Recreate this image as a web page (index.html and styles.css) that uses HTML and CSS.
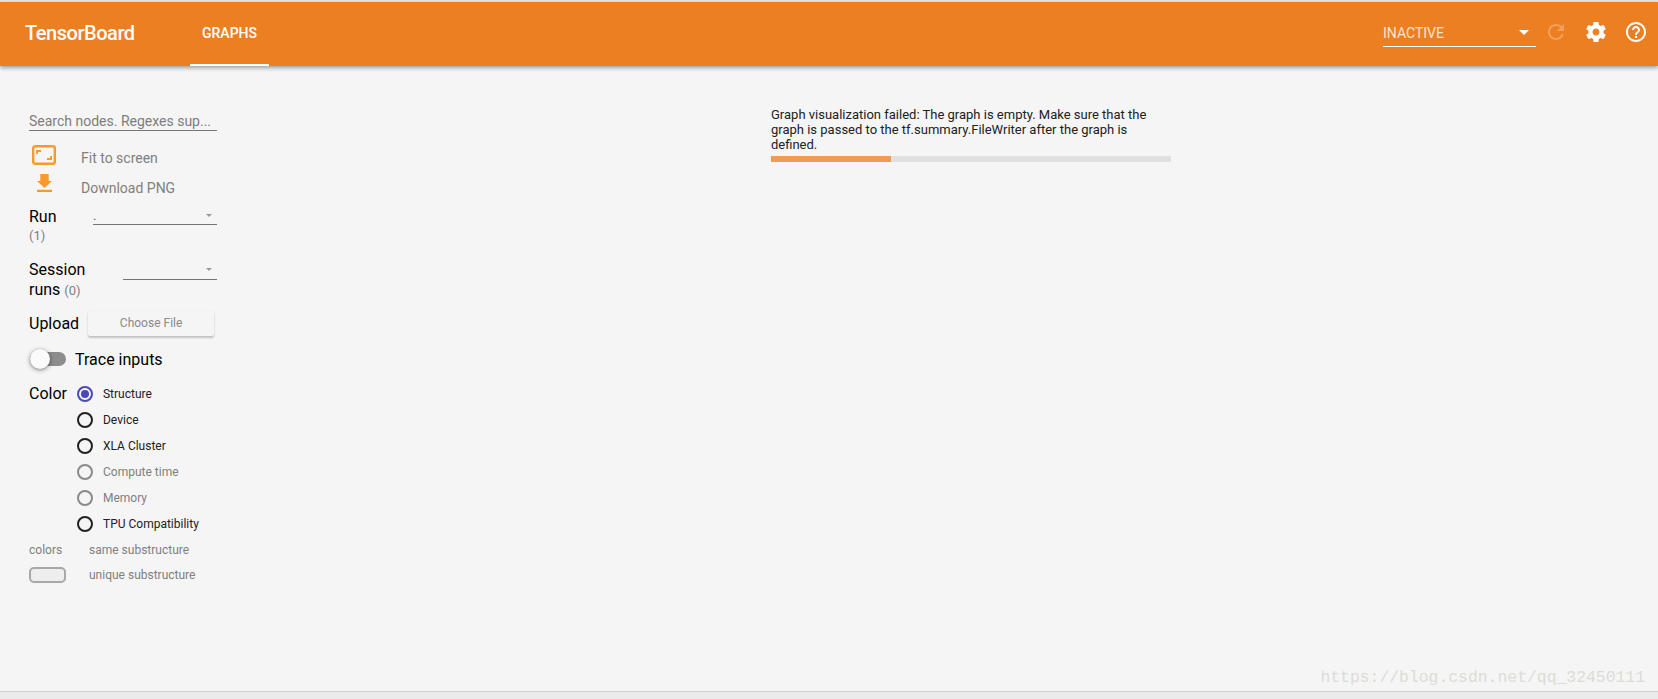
FILE: index.html
```html
<!DOCTYPE html>
<html lang="en">
<head>
<meta charset="utf-8">
<title>TensorBoard</title>
<link rel="stylesheet" href="styles.css">
</head>
<body>
<div class="page">
  <header class="toolbar">
    <div class="brand">TensorBoard</div>
    <nav class="tabs"><div class="tab">GRAPHS</div></nav>
    <div class="spacer"></div>
    <div class="run-select">
      <span>INACTIVE</span>
      <span class="caret-white"></span>
    </div>
    <svg class="icon refresh" viewBox="0 0 24 24"><path d="M17.65 6.35C16.2 4.9 14.21 4 12 4c-4.42 0-7.99 3.58-7.99 8s3.57 8 7.99 8c3.73 0 6.84-2.55 7.73-6h-2.08c-.82 2.33-3.04 4-5.65 4-3.31 0-6-2.69-6-6s2.69-6 6-6c1.66 0 3.14.69 4.22 1.78L13 11h7V4l-2.35 2.35z"/></svg>
    <svg class="icon gear" viewBox="0 0 24 24"><path d="M19.43 12.98c.04-.32.07-.64.07-.98s-.03-.66-.07-.98l2.11-1.65c.19-.15.24-.42.12-.64l-2-3.46c-.12-.22-.39-.3-.61-.22l-2.49 1c-.52-.4-1.08-.73-1.69-.98l-.38-2.65C14.46 2.18 14.25 2 14 2h-4c-.25 0-.46.18-.49.42l-.38 2.65c-.61.25-1.17.59-1.69.98l-2.49-1c-.23-.09-.49 0-.61.22l-2 3.46c-.13.22-.07.49.12.64l2.11 1.65c-.04.32-.07.65-.07.98s.03.66.07.98l-2.11 1.65c-.19.15-.24.42-.12.64l2 3.46c.12.22.39.3.61.22l2.49-1c.52.4 1.08.73 1.69.98l.38 2.65c.03.24.24.42.49.42h4c.25 0 .46-.18.49-.42l.38-2.65c.61-.25 1.17-.59 1.69-.98l2.49 1c.23.09.49 0 .61-.22l2-3.46c.12-.22.07-.49-.12-.64l-2.11-1.65zM12 15.5c-1.93 0-3.5-1.57-3.5-3.5s1.57-3.5 3.5-3.5 3.5 1.57 3.5 3.5-1.57 3.5-3.5 3.5z"/></svg>
    <svg class="icon help" viewBox="0 0 24 24"><path d="M11 18h2v-2h-2v2zm1-16C6.48 2 2 6.48 2 12s4.48 10 10 10 10-4.48 10-10S17.52 2 12 2zm0 18c-4.41 0-8-3.59-8-8s3.59-8 8-8 8 3.59 8 8-3.59 8-8 8zm0-14c-2.21 0-4 1.79-4 4h2c0-1.1.9-2 2-2s2 .9 2 2c0 2-3 1.75-3 5h2c0-2.25 3-2.5 3-5 0-2.21-1.79-4-4-4z"/></svg>
  </header>

  <main class="content">
    <aside class="sidebar">
      <div class="search">Search nodes. Regexes sup...</div>

      <div class="action action-fit">
        <svg class="action-icon" viewBox="0 0 24 20"><rect class="frame" x="1.200" y="1.200" width="21.600" height="17.600" rx="2"/><path d="M4 5h5v1.900H5.900V9H4z"/><path d="M20 15h-5v-1.900h3.100V11H20z"/></svg>
        <span>Fit to screen</span>
      </div>
      <div class="action action-download">
        <svg class="action-icon download" viewBox="0 0 15 18.400"><path d="M15 7h-3.300V0H3.300v7H0l7.500 7L15 7zM0 15.700v2.700h15v-2.700H0z"/></svg>
        <span>Download PNG</span>
      </div>

      <div class="field field-run">
        <div class="field-label">Run<div class="count">(1)</div></div>
        <div class="select select-run"><span>.</span><span class="caret"></span></div>
      </div>

      <div class="field field-session">
        <div class="field-label session-label">Session<br>runs <span class="count-inline">(0)</span></div>
        <div class="select select-session"><span></span><span class="caret"></span></div>
      </div>

      <div class="upload">
        <span class="field-label">Upload</span>
        <div class="file-button">Choose File</div>
      </div>

      <div class="trace">
        <div class="toggle"><span class="knob"></span></div>
        <span class="trace-label">Trace inputs</span>
      </div>

      <div class="color">
        <span class="field-label">Color</span>
        <div class="radios">
          <div class="radio checked"><span class="dot"></span>Structure</div>
          <div class="radio"><span class="dot"></span>Device</div>
          <div class="radio"><span class="dot"></span>XLA Cluster</div>
          <div class="radio off"><span class="dot"></span>Compute time</div>
          <div class="radio off"><span class="dot"></span>Memory</div>
          <div class="radio"><span class="dot"></span>TPU Compatibility</div>
        </div>
      </div>

      <div class="legend">
        <div class="legend-key">colors</div><div>same substructure</div>
        <div class="legend-key"><span class="swatch"></span></div><div>unique substructure</div>
      </div>
    </aside>

    <section class="stage">
      <div class="message">
        <div class="message-text">Graph visualization failed: The graph is empty. Make sure that the graph is passed to the tf.summary.FileWriter after the graph is defined.</div>
        <div class="progress"><div class="progress-fill" style="width:30%"></div></div>
      </div>
    </section>
  </main>

  <footer class="bottom">
    <div class="watermark">https://blog.csdn.net/qq_32450111</div>
  </footer>
</div>
</body>
</html>
```
FILE: styles.css
```css
* { box-sizing: border-box; }
html, body { margin: 0; height: 100%; overflow: hidden; }
body { font-family: Roboto, "Liberation Sans", sans-serif; background: #f5f5f5; color: #212121; }
.page { height: 699px; display: flex; flex-direction: column; border-top: 2px solid #e4e4e4; }

.toolbar { position: relative; z-index: 2; flex: none; height: 64px; padding: 0 10px 0 25px; display: flex; align-items: stretch; background: #ed7f23; color: #fff; box-shadow: 0 2px 4px rgba(0,0,0,.35); }
.brand { width: 165px; font-size: 20px; font-weight: 500; line-height: 63px; letter-spacing: -.46px; }
.tabs { display: flex; }
.tab { width: 79px; height: 64px; text-align: center; font-size: 14px; font-weight: 500; line-height: 63px; border-bottom: 2px solid #fff; }
.spacer { flex: 1; }
.run-select { width: 153px; height: 30px; margin-top: 15px; display: flex; justify-content: space-between; align-items: center; padding: 2px 7px 0 0; font-size: 14px; color: #fde3cc; border-bottom: 1px solid #fff; }
.caret-white { width: 0; height: 0; border: 5px solid transparent; border-top-color: #fff; border-bottom: 0; }
.icon { width: 24px; height: 24px; margin-top: 18px; fill: #fff; flex: none; }
.refresh { margin-left: 8px; opacity: .25; }
.gear { margin-left: 16px; }
.help { margin-left: 16px; }

.content { flex: 1; display: flex; min-height: 0; }
.sidebar { width: 254px; flex: none; padding: 47px 37px 0 29px; font-size: 14px; }
.search { height: 18px; font-size: 14px; line-height: 17px; color: #7d7d7d; border-bottom: 1px solid #757575; white-space: nowrap; }

.action { display: flex; align-items: flex-start; color: #808080; font-size: 14px; }
.action span { margin-left: 25px; }
.action-icon { width: 24px; height: 20px; margin-left: 3px; fill: #f79a2d; flex: none; }
.frame { fill: none; stroke: #f79a2d; stroke-width: 2.400; }
.action-fit { height: 34px; padding-top: 14px; }
.action-fit span { padding-top: 5px; }
.action-download { height: 28px; padding-top: 9px; }
.action-icon.download { width: 15px; height: 18.400px; margin-left: 8px; margin-right: 4px; }
.action-download span { padding-top: 6px; }

.field { display: flex; justify-content: space-between; align-items: flex-start; }
.field-label { font-size: 16px; color: #000; line-height: 20px; }
.count { font-size: 13px; color: #808080; line-height: 18px; }
.count-inline { font-size: 13px; color: #808080; }
.field-run { margin-top: 14px; height: 53px; }
.field-session { height: 46px; }
.session-label { white-space: nowrap; }
.select { display: flex; justify-content: space-between; align-items: center; padding-right: 5px; font-size: 13px; color: #666; border-bottom: 1px solid #757575; }
.select-run { width: 124px; height: 18px; }
.select-session { width: 94px; height: 20px; }
.caret { width: 0; height: 0; border: 3.500px solid transparent; border-top-color: #999; border-bottom: 0; }

.upload { display: flex; align-items: center; gap: 9px; height: 27px; margin-top: 4px; }
.file-button { width: 126px; height: 25px; background: #f5f5f5; border-radius: 2px; box-shadow: 0 2px 2px rgba(0,0,0,.2), 0 0 1px rgba(0,0,0,.15); text-align: center; font-size: 12px; line-height: 24px; color: #8a8a8a; }

.trace { display: flex; align-items: center; height: 22px; margin-top: 11px; }
.toggle { position: relative; width: 36px; height: 14px; margin-left: 1px; border-radius: 7px; background: #8d8d8d; }
.knob { position: absolute; left: 0; top: -3px; width: 20px; height: 20px; border-radius: 50%; background: #fafafa; box-shadow: 0 1px 4px rgba(0,0,0,.5); }
.trace-label { margin-left: 9px; font-size: 16px; color: #000; }

.color { display: flex; align-items: flex-start; margin-top: 11px; }
.color .field-label { line-height: 26px; }
.radios { margin-left: 10px; }
.radio { display: flex; align-items: center; height: 26px; font-size: 12px; color: #212121; }
.dot { position: relative; width: 16px; height: 16px; margin-right: 10px; border-radius: 50%; border: 2px solid #212121; flex: none; }
.radio.off { color: #808080; }
.radio.off .dot { border-color: #8a8a8a; }
.radio.checked .dot { border-color: #4a49b5; }
.radio.checked .dot::after { content: ""; position: absolute; left: 2px; top: 2px; width: 8px; height: 8px; border-radius: 50%; background: #4a49b5; }

.legend { display: grid; grid-template-columns: 60px 1fr; grid-auto-rows: 25px; align-items: center; font-size: 12px; color: #808080; white-space: nowrap; }
.swatch { display: block; width: 37px; height: 16px; border-radius: 5px; background: #eee; border: 2px solid #a8a8a8; }

.stage { flex: 1; padding: 41px 0 0 517px; }
.message { width: 400px; }
.message-text { font-size: 13px; line-height: 15px; color: #212121; }
.progress { height: 6px; margin-top: 4px; background: #e0e0e0; }
.progress-fill { height: 100%; background: #ee9b55; }

.bottom { position: relative; flex: none; height: 8px; background: #ebebeb; border-top: 1px solid #cfcfcf; }
.watermark { position: absolute; right: 13px; bottom: 11px; font-family: "Liberation Mono", monospace; font-size: 16.400px; line-height: 20px; color: #dcdcd6; white-space: nowrap; }
```
